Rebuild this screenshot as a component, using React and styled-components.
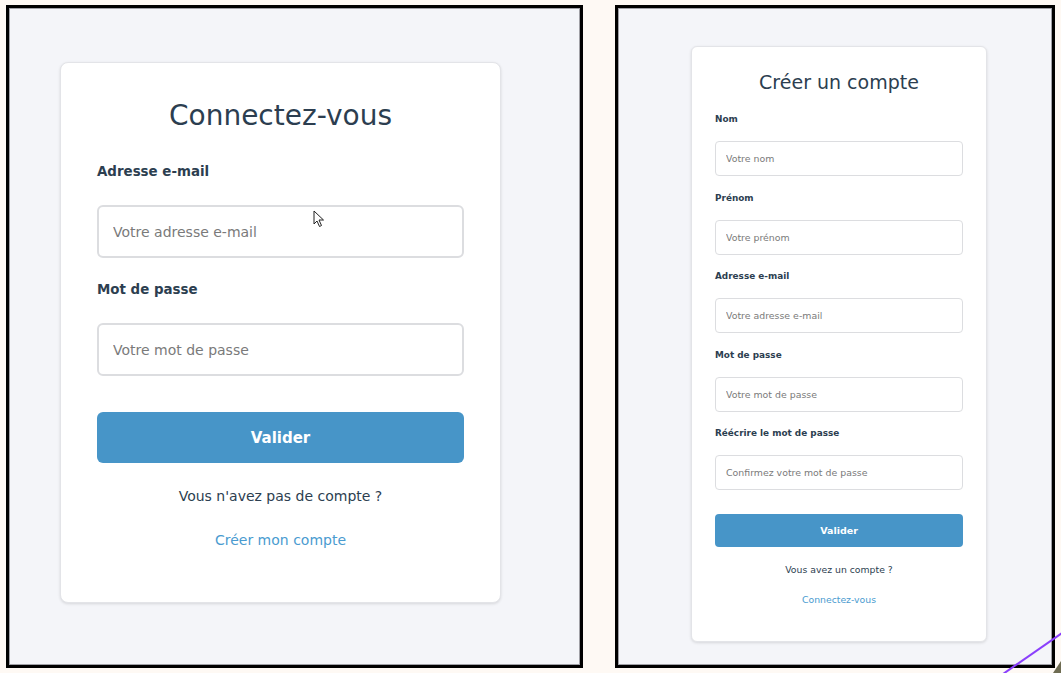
import React from 'react';
import styled, { createGlobalStyle } from 'styled-components';

const GlobalStyle = createGlobalStyle`
  * { box-sizing: border-box; }
  body {
    margin: 0;
    background: #fef9f4;
    font-family: "DejaVu Sans", Verdana, sans-serif;
  }
`;

// two sizes of the same form: the left one is shown large, the right one small
const sizes = {
  large: {
    pad: '36px 36px 53px', width: 441, title: 28, titleLh: 33, titleGap: 31,
    label: 13.4, labelLh: 18, labelGap: 24, fieldGap: 23,
    input: 53, inputFont: 14, inputPad: 14, border: 2, radius: 6,
    btnGap: 36, btn: 51, btnFont: 15, text: 14, textLh: 18, textGap: 24, linkGap: 26,
  },
  small: {
    pad: '24px 23px 35px', width: 296, title: 19, titleLh: 23, titleGap: 19,
    label: 8.9, labelLh: 12, labelGap: 16, fieldGap: 15.5,
    input: 35, inputFont: 9.4, inputPad: 10, border: 1, radius: 4,
    btnGap: 24, btn: 33, btnFont: 9.5, text: 9.3, textLh: 12, textGap: 17, linkGap: 18,
  },
};

const Page = styled.div`
  position: relative;
  width: 1061px;
  height: 673px;
  overflow: hidden;
  display: flex;
  align-items: flex-start;
  gap: 32px;
  padding: 5px 0 0 6px;
`;

const Panel = styled.div`
  position: relative;
  flex: none;
  width: ${p => p.$width}px;
  height: 663px;
  background: #f4f5f9;
  border: 3px solid #000;
  box-shadow: inset 0 0 0 1px #a0a0a6;
  padding: ${p => p.$pad};
`;

const Card = styled.form`
  width: ${p => p.$s.width}px;
  background: #fff;
  border: 1px solid #e3e4e8;
  border-radius: ${p => p.$s.radius + 2}px;
  box-shadow: 0 1px 3px rgba(0, 0, 0, 0.12);
  padding: ${p => p.$s.pad};
  display: flex;
  flex-direction: column;
`;

const Title = styled.h1`
  margin: 0 0 ${p => p.$s.titleGap}px;
  font-size: ${p => p.$s.title}px;
  line-height: ${p => p.$s.titleLh}px;
  font-weight: 400;
  color: #2c3e50;
  text-align: center;
`;

const Fields = styled.div`
  display: flex;
  flex-direction: column;
  gap: ${p => p.$s.fieldGap}px;
`;

const Field = styled.label`
  display: flex;
  flex-direction: column;
  gap: ${p => p.$s.labelGap}px;
`;

const LabelText = styled.span`
  font-size: ${p => p.$s.label}px;
  line-height: ${p => p.$s.labelLh}px;
  font-weight: 700;
  color: #2c3e50;
`;

const Input = styled.input`
  width: 100%;
  height: ${p => p.$s.input}px;
  border: ${p => p.$s.border}px solid #dcdde0;
  border-radius: ${p => p.$s.radius}px;
  padding: 0 ${p => p.$s.inputPad}px;
  font-family: inherit;
  font-size: ${p => p.$s.inputFont}px;
  color: #333;
  background: #fff;
  outline: none;

  &::placeholder { color: #7a7a7a; }
`;

const Button = styled.button`
  margin-top: ${p => p.$s.btnGap}px;
  height: ${p => p.$s.btn}px;
  border: none;
  border-radius: ${p => p.$s.radius}px;
  background: #4795c8;
  color: #fff;
  font-family: inherit;
  font-size: ${p => p.$s.btnFont}px;
  font-weight: 700;
  cursor: pointer;
`;

const Note = styled.p`
  margin: ${p => p.$s.textGap}px 0 0;
  font-size: ${p => p.$s.text}px;
  line-height: ${p => p.$s.textLh}px;
  color: #2c3e50;
  text-align: center;
`;

const SwitchLink = styled.a`
  margin-top: ${p => p.$s.linkGap}px;
  font-size: ${p => p.$s.text}px;
  line-height: ${p => p.$s.textLh}px;
  color: #4a9bd0;
  text-align: center;
  text-decoration: none;
`;

const Cursor = styled.svg`
  position: absolute;
  left: 304px;
  top: 202px;
`;

const Overlay = styled.svg`
  position: absolute;
  left: 0;
  top: 0;
  pointer-events: none;
`;

const AuthForm = ({ size, title, fields, note, link }) => {
  const s = sizes[size];
  return (
    <Card $s={s} onSubmit={e => e.preventDefault()}>
      <Title $s={s}>{title}</Title>
      <Fields $s={s}>
        {fields.map(f => (
          <Field key={f.label} $s={s}>
            <LabelText $s={s}>{f.label}</LabelText>
            <Input $s={s} type={f.type || 'text'} placeholder={f.placeholder} />
          </Field>
        ))}
      </Fields>
      <Button $s={s} type="submit">Valider</Button>
      <Note $s={s}>{note}</Note>
      <SwitchLink $s={s} href="#">{link}</SwitchLink>
    </Card>
  );
};

const App = () => (
  <>
    <GlobalStyle />
    <Page>
      <Panel $width={577} $pad="54px 0 0 51px">
        <AuthForm
          size="large"
          title="Connectez-vous"
          fields={[
            { label: 'Adresse e-mail', placeholder: 'Votre adresse e-mail', type: 'email' },
            { label: 'Mot de passe', placeholder: 'Votre mot de passe', type: 'password' },
          ]}
          note="Vous n'avez pas de compte ?"
          link="Créer mon compte"
        />
        <Cursor width="12" height="18" viewBox="0 0 12 18">
          <path d="M1 1 L1 14 L4 11 L6.5 16.5 L8.5 15.5 L6 10 L10.5 10 Z"
            fill="#fff" stroke="#222" strokeWidth="1" strokeLinejoin="round" />
        </Cursor>
      </Panel>
      <Panel $width={440} $pad="38px 0 0 73px">
        <AuthForm
          size="small"
          title="Créer un compte"
          fields={[
            { label: 'Nom', placeholder: 'Votre nom' },
            { label: 'Prénom', placeholder: 'Votre prénom' },
            { label: 'Adresse e-mail', placeholder: 'Votre adresse e-mail', type: 'email' },
            { label: 'Mot de passe', placeholder: 'Votre mot de passe', type: 'password' },
            { label: 'Réécrire le mot de passe', placeholder: 'Confirmez votre mot de passe', type: 'password' },
          ]}
          note="Vous avez un compte ?"
          link="Connectez-vous"
        />
      </Panel>
      <Overlay width="1061" height="673" viewBox="0 0 1061 673">
        <line x1="1003" y1="674" x2="1062" y2="633" stroke="#8a3ffc" strokeWidth="2" />
        <polygon points="1053,673 1061,673 1061,661" fill="#6e6c52" />
      </Overlay>
    </Page>
  </>
);

export default App;
